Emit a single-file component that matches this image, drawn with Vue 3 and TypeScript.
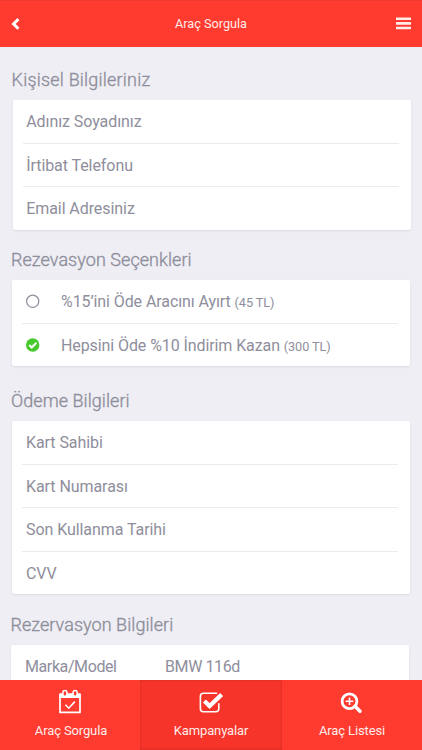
<script setup lang="ts">
interface Option {
  label: string
  price: string
  checked: boolean
}

const personal: string[] = ['Adınız Soyadınız', 'İrtibat Telefonu', 'Email Adresiniz']
const options: Option[] = [
  { label: '%15’ini Öde Aracını Ayırt', price: '(45 TL)', checked: false },
  { label: 'Hepsini Öde %10 İndirim Kazan', price: '(300 TL)', checked: true },
]
const payment: string[] = ['Kart Sahibi', 'Kart Numarası', 'Son Kullanma Tarihi', 'CVV']
</script>

<template>
  <div class="screen">
    <header class="bar">
      <svg class="back" viewBox="0 0 9 12" width="9" height="12">
        <path d="M7.4 1.1 2.5 5.9l4.9 4.8" fill="none" stroke="#fff" stroke-width="2.9" />
      </svg>
      <h1 class="title">Araç Sorgula</h1>
      <svg class="menu" viewBox="0 0 15 13" width="15" height="13">
        <path d="M0 .5h15v2.6H0zM0 5.1h15v2.6H0zM0 9.7h15v2.6H0z" fill="#ffece9" />
      </svg>
    </header>

    <main class="content">
      <section class="group personal">
        <h2 class="heading">Kişisel Bilgileriniz</h2>
        <div class="card">
          <div v-for="item in personal" :key="item" class="row"><span>{{ item }}</span></div>
        </div>
      </section>

      <section class="group options">
        <h2 class="heading">Rezevasyon Seçenkleri</h2>
        <div class="card">
          <div v-for="item in options" :key="item.label" class="row">
            <svg class="radio" viewBox="0 0 14 14" width="14" height="14">
              <template v-if="item.checked">
                <circle cx="6.7" cy="7" r="6.7" fill="#46c92b" />
                <path d="M3.2 7.1 5.7 9.6l4.7-4.8" fill="none" stroke="#fff" stroke-width="2.1" />
              </template>
              <circle v-else cx="6.7" cy="7.3" r="6.1" fill="none" stroke="#8e8e9c" stroke-width="1.2" />
            </svg>
            <span>{{ item.label }} <small class="price">{{ item.price }}</small></span>
          </div>
        </div>
      </section>

      <section class="group payment">
        <h2 class="heading">Ödeme Bilgileri</h2>
        <div class="card">
          <div v-for="item in payment" :key="item" class="row"><span>{{ item }}</span></div>
        </div>
      </section>

      <section class="group booking">
        <h2 class="heading">Rezervasyon Bilgileri</h2>
        <div class="card">
          <div class="row"><span class="key">Marka/Model</span><span>BMW 116d</span></div>
        </div>
      </section>
    </main>

    <nav class="tabs">
      <a class="tab">
        <svg viewBox="0 0 24 26" width="24" height="26">
          <path d="M2 5.2h20v18.2H2z" fill="none" stroke="#fff" stroke-width="1.7" stroke-linejoin="round" />
          <path d="M1.5 5h21v4h-21z" fill="#fff" />
          <rect x="4.9" y="1.5" width="4" height="5.8" rx="2" fill="#ff3b30" stroke="#fff" stroke-width="1.5" />
          <rect x="15.1" y="1.5" width="4" height="5.8" rx="2" fill="#ff3b30" stroke="#fff" stroke-width="1.5" />
          <path d="m7.4 15.8 3.4 3.4 6-6.6" fill="none" stroke="#fff" stroke-width="1.6" />
        </svg>
        <span>Araç Sorgula</span>
      </a>
      <a class="tab active">
        <svg viewBox="0 0 24 26" width="24" height="26">
          <path d="M17.6 4.2H4.4a3 3 0 0 0-3 3v12.6a3 3 0 0 0 3 3h12.4a3 3 0 0 0 3-3v-5" fill="none" stroke="#fff" stroke-width="1.6" stroke-linecap="round" />
          <path d="m5.4 11.9 5.2 5.2L22.6 5.6" fill="none" stroke="#fff" stroke-width="4.2" />
        </svg>
        <span>Kampanyalar</span>
      </a>
      <a class="tab">
        <svg viewBox="0 0 24 26" width="24" height="26">
          <circle cx="9.5" cy="12.2" r="7.4" fill="none" stroke="#fff" stroke-width="2.8" />
          <path d="m15 17.2 5 5" stroke="#fff" stroke-width="3.5" stroke-linecap="round" />
          <path d="M5.7 12.2h7.6M9.5 8.4V16" stroke="#fff" stroke-width="1.6" />
        </svg>
        <span>Araç Listesi</span>
      </a>
    </nav>
  </div>
</template>

<style>
body {
  margin: 0;
  overflow: hidden;
}
</style>

<style scoped>
.screen {
  display: flex;
  flex-direction: column;
  width: 422px;
  height: 750px;
  overflow: hidden;
  background: #efeef4;
  color: #8e8e9c;
  font-family: Roboto, sans-serif;
}

.bar {
  display: flex;
  flex: none;
  align-items: center;
  justify-content: space-between;
  box-sizing: border-box;
  height: 47px;
  padding: 0 11px;
  background: #ff3b30;
  box-shadow: inset 0 1px 0 #ed3930;
}

.back {
  width: 9px;
  margin-right: 6px;
}

.title {
  margin: 0;
  color: #ffece9;
  font-size: 12.7px;
  font-weight: 400;
}

.content {
  flex: 1;
  min-height: 0;
  overflow: hidden;
}

.group {
  width: 398px;
  margin-left: 12px;
}

.heading {
  margin: 0 0 0 -1px;
  font-size: 18px;
  font-weight: 300;
  line-height: 22px;
  letter-spacing: 0.06px;
  -webkit-text-stroke: 0.35px currentColor;
}

.card {
  margin-top: 9px;
  overflow: hidden;
  border-radius: 2px;
  background: #fff;
  box-shadow: 0 1px 2px #d9d8df;
  font-size: 16px;
  letter-spacing: -0.07px;
}

.row {
  display: flex;
  align-items: center;
  box-sizing: border-box;
  height: 43.6px;
  margin: 0 12px 0 10px;
  padding-left: 4px;
  border-bottom: 1px solid #ebebed;
}

.row:last-child {
  border-bottom: 0;
}

.personal {
  margin-left: 12.6px;
  padding-top: 22px;
}

.personal .heading {
  letter-spacing: 0.2px;
}

.personal .card {
  height: 129.5px;
}

.personal .row {
  padding-left: 3.6px;
}

.personal .row:nth-child(2) {
  padding-top: 1px;
}

.options {
  padding-top: 19.5px;
}

.options .card {
  height: 86px;
  letter-spacing: -0.09px;
}

.payment {
  padding-top: 24px;
}

.payment .card {
  height: 173px;
}

.payment .row:nth-child(2) {
  padding-top: 1px;
}

.booking {
  margin-left: 11px;
  padding-top: 20px;
}

.booking .heading {
  margin-left: -0.6px;
}

.booking .card {
  height: 120px;
  letter-spacing: -0.4px;
}

.radio {
  flex: none;
  margin-right: 21px;
}

.price {
  font-size: 12.7px;
}

.key {
  width: 140px;
}

.tabs {
  display: grid;
  flex: none;
  grid-template-columns: 140px 142px 140px;
  height: 70px;
  background: #ff3b30;
}

.tab {
  display: flex;
  flex-direction: column;
  align-items: center;
  box-sizing: border-box;
  padding-top: 9px;
  color: #ffece9;
  font-size: 13px;
  line-height: 16px;
  letter-spacing: -0.13px;
}

.tab span {
  margin-top: 8px;
}

.tab:first-child span {
  padding-left: 2px;
}

.tab.active {
  background: #f6342a;
  box-shadow: inset 0 0 3px #cf2b23;
}
</style>
